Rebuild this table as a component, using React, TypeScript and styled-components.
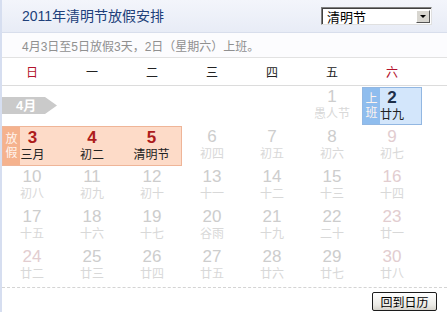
import React from 'react';
import styled, { createGlobalStyle } from 'styled-components';

const GlobalStyle = createGlobalStyle`
  body {
    margin: 0;
    background: #fff;
    font-family: "Liberation Sans", "Noto Sans CJK SC", sans-serif;
  }
`;

const Panel = styled.div`
  width: 447px;
  height: 312px;
  overflow: hidden;
  box-sizing: border-box;
  border-left: 2px solid #d6def0;
  background: #fff;
`;

const Header = styled.header`
  height: 33px;
  box-sizing: border-box;
  display: flex;
  align-items: center;
  justify-content: space-between;
  padding: 0 15px 0 20px;
  background: linear-gradient(to bottom, #f3f5fb, #e8ecf6);
  border-bottom: 1px solid #d8deec;
`;

const Title = styled.h1`
  margin: 0;
  font-size: 14px;
  font-weight: normal;
  color: #20407a;
  line-height: 18px;
`;

const Select = styled.div`
  width: 111px;
  height: 18px;
  box-sizing: border-box;
  display: flex;
  align-items: center;
  justify-content: space-between;
  background: #fff;
  border: 1px solid #7f7f7f;
  border-right-color: #e0e0e0;
  border-bottom-color: #e0e0e0;
  box-shadow: inset 1px 1px 0 #404040;
  padding: 0 1px 0 5px;
  font-size: 13px;
  color: #000;
`;

const SelectButton = styled.span`
  width: 14px;
  height: 13px;
  box-sizing: border-box;
  display: flex;
  align-items: center;
  justify-content: center;
  background: #d8d6d0;
  border: 1px solid #fff;
  border-right-color: #555;
  border-bottom-color: #555;

  &::after {
    content: '';
    border-left: 3px solid transparent;
    border-right: 3px solid transparent;
    border-top: 3px solid #000;
  }
`;

const Notice = styled.div`
  height: 25px;
  box-sizing: border-box;
  display: flex;
  align-items: center;
  padding-left: 20px;
  font-size: 12px;
  color: #909090;
  background: #fcfcfe;
  border-bottom: 1px solid #e2e2e2;
`;

const WeekRow = styled.div`
  display: grid;
  grid-template-columns: repeat(7, 60px);
  height: 27px;
  align-items: center;
  border-bottom: 1px solid #dcdcdc;
`;

const WeekDay = styled.span<{ $weekend?: boolean }>`
  text-align: center;
  font-size: 12px;
  color: ${(p) => (p.$weekend ? '#b3122c' : '#222')};
`;

const Body = styled.div`
  position: relative;
`;

const MonthTag = styled.div`
  position: absolute;
  top: 11px;
  left: -2px;
  width: 57px;
  height: 17px;
  padding-left: 16px;
  box-sizing: border-box;
  background: #cacaca;
  clip-path: polygon(0 0, 45px 0, 57px 50%, 45px 100%, 0 100%);
  color: #fff;
  font-weight: bold;
  font-size: 13px;
  line-height: 17px;
  z-index: 1;
`;

const Grid = styled.div`
  display: grid;
  grid-template-columns: repeat(7, 60px);
  grid-auto-rows: 40px;
`;

type Tone = 'holiday' | 'work' | 'plain';

const Cell = styled.div<{ $tone: Tone; $first?: boolean; $last?: boolean }>`
  position: relative;
  display: flex;
  flex-direction: column;
  align-items: center;
  box-sizing: border-box;
  padding-top: 2px;
  ${(p) =>
    p.$tone === 'holiday' &&
    `
    background: #fddbc8;
    border-top: 1px solid #efb598;
    border-bottom: 1px solid #efb598;
    ${p.$first ? 'border-left: 1px solid #efb598;' : ''}
    ${p.$last ? 'border-right: 1px solid #efb598;' : ''}
  `}
  ${(p) =>
    p.$tone === 'work' &&
    `
    margin-top: 1px;
    height: 38px;
    padding-top: 1px;
    background: #d3e6fb;
    border: 1px solid #92b7e2;
  `}
`;

const Strip = styled.span<{ $tone: Tone }>`
  position: absolute;
  left: 0;
  top: 0;
  bottom: 0;
  width: 17px;
  display: flex;
  flex-direction: column;
  justify-content: center;
  align-items: center;
  font-size: 12px;
  line-height: 14px;
  color: #fff4ee;
  background: ${(p) => (p.$tone === 'holiday' ? '#f5b28d' : '#8fbdee')};
`;

const DayNum = styled.span<{ $tone: Tone; $pink?: boolean }>`
  font-size: 17px;
  line-height: 18px;
  font-weight: ${(p) => (p.$tone === 'plain' ? 'normal' : 'bold')};
  color: ${(p) =>
    p.$tone === 'holiday'
      ? '#ad1c1c'
      : p.$tone === 'work'
      ? '#1d2f48'
      : p.$pink
      ? '#e2cdd0'
      : '#cdcdcd'};
`;

const Lunar = styled.span<{ $tone: Tone }>`
  font-size: 12px;
  line-height: 16px;
  color: ${(p) => (p.$tone === 'plain' ? '#d8d8d8' : '#222')};
`;

const Footer = styled.footer`
  border-top: 1px dashed #d4d4d4;
  margin-top: 1px;
  display: flex;
  justify-content: flex-end;
  padding: 4px 10px 0 0;
`;

const BackButton = styled.button`
  width: 65px;
  height: 19px;
  padding: 0;
  font-family: inherit;
  font-size: 12px;
  color: #000;
  border: 1px solid #1c1c1c;
  border-radius: 2px;
  background: linear-gradient(to bottom, #ffffff, #ecebe6 70%, #d6d4cc);
`;

const weekDays = ['日', '一', '二', '三', '四', '五', '六'];

const lunar: Record<number, string> = {
  1: '愚人节', 2: '廿九', 3: '三月', 4: '初二', 5: '清明节', 6: '初四', 7: '初五',
  8: '初六', 9: '初七', 10: '初八', 11: '初九', 12: '初十', 13: '十一', 14: '十二',
  15: '十三', 16: '十四', 17: '十五', 18: '十六', 19: '十七', 20: '谷雨', 21: '十九',
  22: '二十', 23: '廿一', 24: '廿二', 25: '廿三', 26: '廿四', 27: '廿五', 28: '廿六',
  29: '廿七', 30: '廿八',
};

const pinkDays = [9, 16, 23, 24, 30];

const toneOf = (d: number): Tone => (d >= 3 && d <= 5 ? 'holiday' : d === 2 ? 'work' : 'plain');

const App: React.FC = () => {
  // April 2011 starts on a Friday
  const cells: (number | null)[] = [null, null, null, null, null];
  for (let d = 1; d <= 30; d++) cells.push(d);

  return (
    <Panel>
      <GlobalStyle />
      <Header>
        <Title>2011年清明节放假安排</Title>
        <Select>
          清明节
          <SelectButton />
        </Select>
      </Header>
      <Notice>4月3日至5日放假3天，2日（星期六）上班。</Notice>
      <WeekRow>
        {weekDays.map((w, i) => (
          <WeekDay key={w} $weekend={i === 0 || i === 6}>
            {w}
          </WeekDay>
        ))}
      </WeekRow>
      <Body>
        <MonthTag>4月</MonthTag>
        <Grid>
          {cells.map((d, i) => {
            if (d === null) return <div key={`e${i}`} />;
            const tone = toneOf(d);
            return (
              <Cell key={d} $tone={tone} $first={d === 3} $last={d === 5}>
                {d === 3 && <Strip $tone="holiday">放<br />假</Strip>}
                {d === 2 && <Strip $tone="work">上<br />班</Strip>}
                <DayNum $tone={tone} $pink={pinkDays.includes(d)}>
                  {d}
                </DayNum>
                <Lunar $tone={tone}>{lunar[d]}</Lunar>
              </Cell>
            );
          })}
        </Grid>
      </Body>
      <Footer>
        <BackButton>回到日历</BackButton>
      </Footer>
    </Panel>
  );
};

export default App;
